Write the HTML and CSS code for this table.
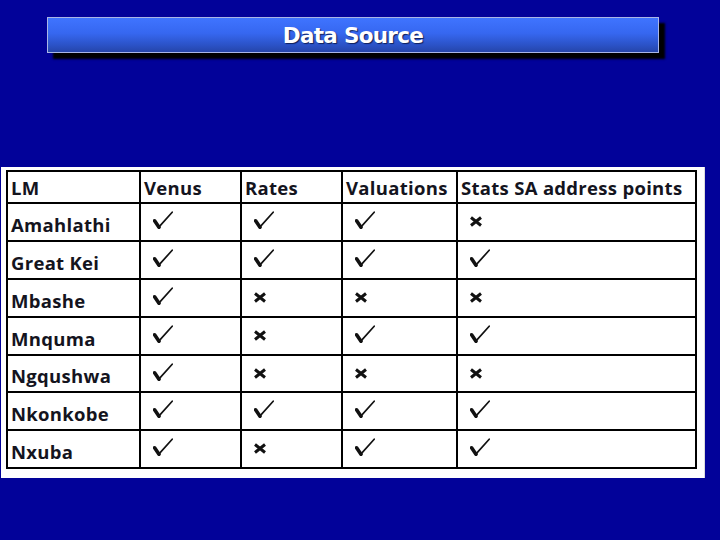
FILE: index.html
```html
<!DOCTYPE html>
<html>
<head>
<meta charset="utf-8">
<link rel="stylesheet" href="styles.css">
</head>
<body>
<div class="slide">
  <div class="title-bar"><h1 class="title">Data Source</h1></div>
  <div class="sheet">
    <div class="grid">
      <div class="cell head">LM</div>
      <div class="cell head">Venus</div>
      <div class="cell head">Rates</div>
      <div class="cell head">Valuations</div>
      <div class="cell head">Stats SA address points</div>

      <div class="cell name">Amahlathi</div>
      <div class="cell mark"><svg class="chk" viewBox="0 0 20 18"><path class="s" d="M1.6 9.8 L6 16.2"/><path class="l" d="M5.6 16.4 L19.2 1.2"/></svg></div>
      <div class="cell mark"><svg class="chk" viewBox="0 0 20 18"><path class="s" d="M1.6 9.8 L6 16.2"/><path class="l" d="M5.6 16.4 L19.2 1.2"/></svg></div>
      <div class="cell mark"><svg class="chk" viewBox="0 0 20 18"><path class="s" d="M1.6 9.8 L6 16.2"/><path class="l" d="M5.6 16.4 L19.2 1.2"/></svg></div>
      <div class="cell mark"><svg class="x" viewBox="0 0 14 11"><path d="M2 1.5 L12 9.5 M12 1.5 L2 9.5"/></svg></div>

      <div class="cell name">Great Kei</div>
      <div class="cell mark"><svg class="chk" viewBox="0 0 20 18"><path class="s" d="M1.6 9.8 L6 16.2"/><path class="l" d="M5.6 16.4 L19.2 1.2"/></svg></div>
      <div class="cell mark"><svg class="chk" viewBox="0 0 20 18"><path class="s" d="M1.6 9.8 L6 16.2"/><path class="l" d="M5.6 16.4 L19.2 1.2"/></svg></div>
      <div class="cell mark"><svg class="chk" viewBox="0 0 20 18"><path class="s" d="M1.6 9.8 L6 16.2"/><path class="l" d="M5.6 16.4 L19.2 1.2"/></svg></div>
      <div class="cell mark"><svg class="chk" viewBox="0 0 20 18"><path class="s" d="M1.6 9.8 L6 16.2"/><path class="l" d="M5.6 16.4 L19.2 1.2"/></svg></div>

      <div class="cell name">Mbashe</div>
      <div class="cell mark"><svg class="chk" viewBox="0 0 20 18"><path class="s" d="M1.6 9.8 L6 16.2"/><path class="l" d="M5.6 16.4 L19.2 1.2"/></svg></div>
      <div class="cell mark"><svg class="x" viewBox="0 0 14 11"><path d="M2 1.5 L12 9.5 M12 1.5 L2 9.5"/></svg></div>
      <div class="cell mark"><svg class="x" viewBox="0 0 14 11"><path d="M2 1.5 L12 9.5 M12 1.5 L2 9.5"/></svg></div>
      <div class="cell mark"><svg class="x" viewBox="0 0 14 11"><path d="M2 1.5 L12 9.5 M12 1.5 L2 9.5"/></svg></div>

      <div class="cell name">Mnquma</div>
      <div class="cell mark"><svg class="chk" viewBox="0 0 20 18"><path class="s" d="M1.6 9.8 L6 16.2"/><path class="l" d="M5.6 16.4 L19.2 1.2"/></svg></div>
      <div class="cell mark"><svg class="x" viewBox="0 0 14 11"><path d="M2 1.5 L12 9.5 M12 1.5 L2 9.5"/></svg></div>
      <div class="cell mark"><svg class="chk" viewBox="0 0 20 18"><path class="s" d="M1.6 9.8 L6 16.2"/><path class="l" d="M5.6 16.4 L19.2 1.2"/></svg></div>
      <div class="cell mark"><svg class="chk" viewBox="0 0 20 18"><path class="s" d="M1.6 9.8 L6 16.2"/><path class="l" d="M5.6 16.4 L19.2 1.2"/></svg></div>

      <div class="cell name">Ngqushwa</div>
      <div class="cell mark"><svg class="chk" viewBox="0 0 20 18"><path class="s" d="M1.6 9.8 L6 16.2"/><path class="l" d="M5.6 16.4 L19.2 1.2"/></svg></div>
      <div class="cell mark"><svg class="x" viewBox="0 0 14 11"><path d="M2 1.5 L12 9.5 M12 1.5 L2 9.5"/></svg></div>
      <div class="cell mark"><svg class="x" viewBox="0 0 14 11"><path d="M2 1.5 L12 9.5 M12 1.5 L2 9.5"/></svg></div>
      <div class="cell mark"><svg class="x" viewBox="0 0 14 11"><path d="M2 1.5 L12 9.5 M12 1.5 L2 9.5"/></svg></div>

      <div class="cell name">Nkonkobe</div>
      <div class="cell mark"><svg class="chk" viewBox="0 0 20 18"><path class="s" d="M1.6 9.8 L6 16.2"/><path class="l" d="M5.6 16.4 L19.2 1.2"/></svg></div>
      <div class="cell mark"><svg class="chk" viewBox="0 0 20 18"><path class="s" d="M1.6 9.8 L6 16.2"/><path class="l" d="M5.6 16.4 L19.2 1.2"/></svg></div>
      <div class="cell mark"><svg class="chk" viewBox="0 0 20 18"><path class="s" d="M1.6 9.8 L6 16.2"/><path class="l" d="M5.6 16.4 L19.2 1.2"/></svg></div>
      <div class="cell mark"><svg class="chk" viewBox="0 0 20 18"><path class="s" d="M1.6 9.8 L6 16.2"/><path class="l" d="M5.6 16.4 L19.2 1.2"/></svg></div>

      <div class="cell name">Nxuba</div>
      <div class="cell mark"><svg class="chk" viewBox="0 0 20 18"><path class="s" d="M1.6 9.8 L6 16.2"/><path class="l" d="M5.6 16.4 L19.2 1.2"/></svg></div>
      <div class="cell mark"><svg class="x" viewBox="0 0 14 11"><path d="M2 1.5 L12 9.5 M12 1.5 L2 9.5"/></svg></div>
      <div class="cell mark"><svg class="chk" viewBox="0 0 20 18"><path class="s" d="M1.6 9.8 L6 16.2"/><path class="l" d="M5.6 16.4 L19.2 1.2"/></svg></div>
      <div class="cell mark"><svg class="chk" viewBox="0 0 20 18"><path class="s" d="M1.6 9.8 L6 16.2"/><path class="l" d="M5.6 16.4 L19.2 1.2"/></svg></div>
    </div>
  </div>
</div>
</body>
</html>
```

FILE: styles.css
```css
html, body {
  margin: 0;
  padding: 0;
  background: #020299;
}
.slide {
  width: 720px;
  height: 540px;
  background: #020299;
  overflow: hidden;
  display: flex;
  flex-direction: column;
}
.title-bar {
  margin: 17px 0 0 47px;
  width: 610px;
  height: 34px;
  border: 1px solid #a9b6e6;
  background: linear-gradient(to bottom, #3f74ff 0%, #3667f0 45%, #2b52c6 80%, #2545aa 100%);
  box-shadow: 6px 6px 2px #000000;
  display: flex;
  align-items: center;
  justify-content: center;
}
.title {
  margin: 0;
  font-family: "DejaVu Sans", Verdana, sans-serif;
  font-weight: bold;
  font-size: 21.5px;
  letter-spacing: -0.7px;
  color: #ffffff;
  text-shadow: 1px 1px 1px #10205a;
  line-height: 1;
  padding-top: 2px;
}
.sheet {
  margin: 114px 0 0 1px;
  width: 698px;
  height: 308px;
  background: #ffffff;
  padding: 3px 0 0 5px;
  border-right: 1px solid #dcdcdc;
}
.grid {
  display: grid;
  grid-template-columns: 131px 99px 99px 113px 237px;
  grid-template-rows: 30px repeat(7, 35.9px);
  gap: 2px;
  padding: 2px;
  width: max-content;
  background: #000000;
}
.cell {
  background: #ffffff;
  font-family: "Open Sans", "Lato", sans-serif;
  font-weight: bold;
  color: #14141e;
  display: flex;
  align-items: flex-end;
  letter-spacing: 0.3px;
}
.head {
  font-size: 18.5px;
  padding: 0 0 2px 3px;
}
.name {
  font-size: 18.5px;
  padding: 0 0 3px 3px;
}
.mark {
  align-items: flex-start;
}
.chk {
  width: 20px;
  height: 18px;
  margin: 7px 0 0 12px;
  fill: none;
  stroke: #111111;
  stroke-linecap: round;
}
.chk .s {
  stroke-width: 3.6;
}
.chk .l {
  stroke-width: 1.7;
}
.x {
  width: 14px;
  height: 11px;
  margin: 12px 0 0 11px;
  stroke: #111111;
  stroke-width: 3;
  fill: none;
}
```
